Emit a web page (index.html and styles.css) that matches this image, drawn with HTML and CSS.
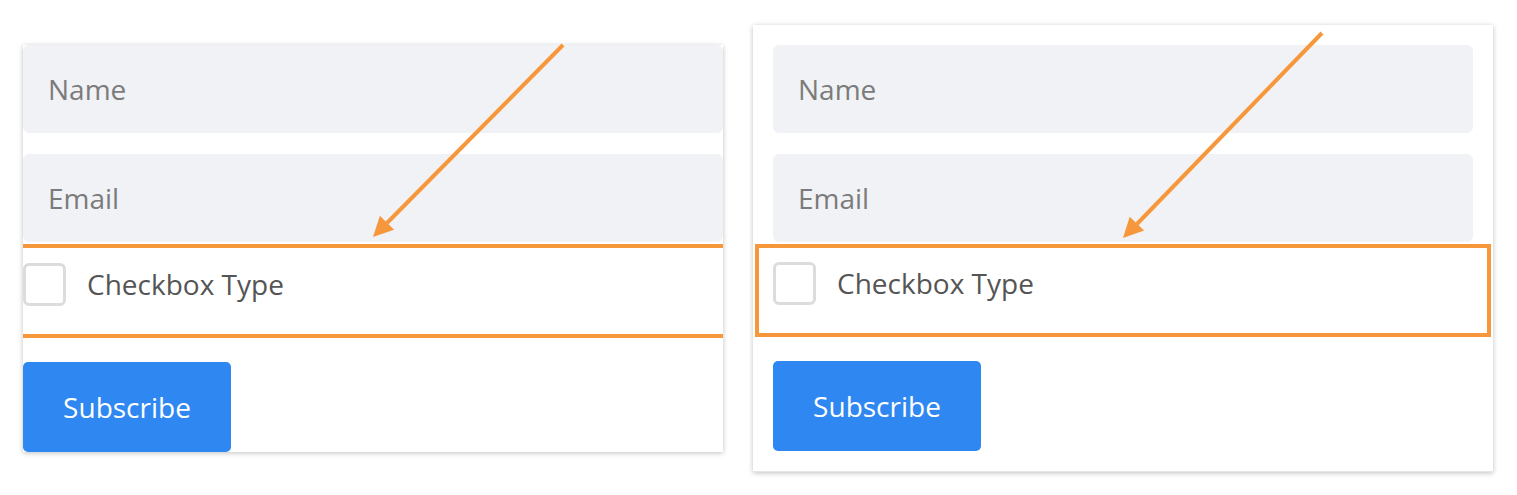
FILE: index.html
```html
<!DOCTYPE html>
<html lang="en">
<head>
  <meta charset="UTF-8" />
  <title>Checkbox Type</title>
  <link rel="stylesheet" href="styles.css">
</head>
<body>
  <div class="page">

    <!-- full-width row -->
    <div class="panel plain">
      <form class="form">
        <input class="field" type="text" placeholder="Name">
        <input class="field" type="email" placeholder="Email">
        <label class="check-row">
          <span class="box"></span>
          <span class="check-text">Checkbox Type</span>
        </label>
        <button class="btn" type="button">Subscribe</button>
      </form>
      <svg class="arrow" width="700" height="406" viewBox="0 0 700 406">
        <line x1="540" y1="0" x2="364" y2="178" />
        <polygon points="350,192 371.1,184.8 356.9,170.8" />
      </svg>
    </div>

    <!-- boxed row -->
    <div class="panel padded">
      <form class="form">
        <input class="field" type="text" placeholder="Name">
        <input class="field" type="email" placeholder="Email">
        <label class="check-row boxed">
          <span class="box"></span>
          <span class="check-text">Checkbox Type</span>
        </label>
        <button class="btn" type="button">Subscribe</button>
      </form>
      <svg class="arrow" width="740" height="447" viewBox="0 0 740 447">
        <line x1="569" y1="8" x2="384" y2="199" />
        <polygon points="370,213 391.1,205.6 376.7,191.7" />
      </svg>
    </div>

  </div>
</body>
</html>
```

FILE: styles.css
```css
* {
  box-sizing: border-box;
}

html,
body {
  height: 100%;
}

body {
  margin: 0;
  background: white;
  font-family: "Open Sans", Arial, sans-serif;
}

.page {
  display: flex;
  align-items: flex-start;
  gap: 30px;
  padding: 25px 0 0 23px;
}

.panel {
  position: relative;
  background: white;
  box-shadow: 0 1px 5px rgba(0, 0, 0, 0.25);
}

.plain {
  width: 700px;
  margin-top: 20px;
}

.padded {
  width: 740px;
  padding: 20px;
  border-bottom: 1px solid #e6e6e6;
}

.form {
  display: flex;
  flex-direction: column;
  align-items: flex-start;
}

.field {
  width: 100%;
  height: 88px;
  margin-bottom: 21px;
  padding: 0 25px;
  border: none;
  border-radius: 6px;
  background: #f1f2f5;
  font-family: inherit;
  font-size: 28px;
  color: #444;
}

.field:nth-of-type(2) {
  margin-bottom: 2px;
}

.field::placeholder {
  color: #7b7b7b;
}

.check-row {
  display: flex;
  align-items: flex-start;
  align-self: stretch;
  padding: 15px 0 28px;
  margin-bottom: 24px;
  border-top: 4px solid #f7973b;
  border-bottom: 4px solid #f7973b;
}

.check-row.boxed {
  border: 4px solid #f7973b;
  margin-left: -18px;
  margin-right: -18px;
  padding: 14px 14px 28px;
}

.box {
  width: 43px;
  height: 43px;
  border: 3px solid #dcdcdc;
  border-radius: 6px;
  flex-shrink: 0;
}

.check-text {
  margin-left: 21px;
  font-size: 28px;
  line-height: 43px;
  color: #555;
}

.btn {
  width: 208px;
  height: 90px;
  border: none;
  border-radius: 5px;
  background: #2f87f2;
  color: white;
  font-family: inherit;
  font-size: 28px;
}

.arrow {
  position: absolute;
  top: 0;
  left: 0;
  overflow: visible;
  pointer-events: none;
}

.arrow line {
  stroke: #f7973b;
  stroke-width: 4;
}

.arrow polygon {
  fill: #f7973b;
}
```
